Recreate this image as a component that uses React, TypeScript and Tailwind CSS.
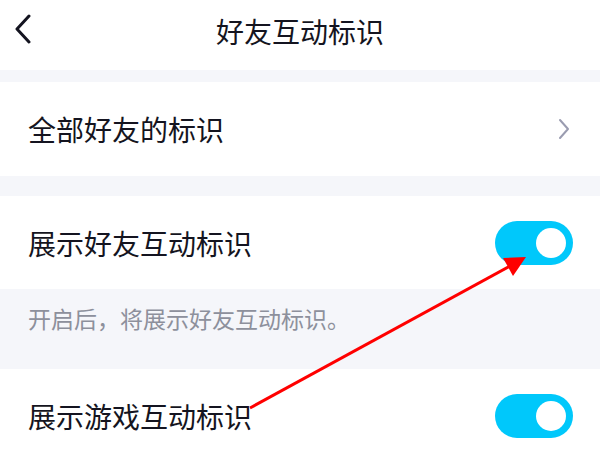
const font = { fontFamily: '"Noto Sans CJK SC", "Noto Sans", sans-serif' };

function Toggle() {
  return (
    <div className="flex h-[44px] w-[78px] items-center justify-end rounded-full bg-[#00c8fb] pr-[7px]">
      <div className="h-[30px] w-[30px] rounded-full bg-white" />
    </div>
  );
}

export default function App() {
  return (
    <div className="relative h-[450px] w-[600px] overflow-hidden bg-white text-[#141420]" style={font}>
      <header className="relative flex h-[70px] items-center justify-center pb-[8px]">
        <svg className="absolute left-[12px] top-[14px]" width="22" height="30" viewBox="0 0 22 30" fill="none">
          <path d="M17 2 L5 15 L17 28" stroke="#141420" strokeWidth="3" strokeLinecap="round" strokeLinejoin="round" />
        </svg>
        <h1 className="text-[28px] leading-none">好友互动标识</h1>
      </header>
      <div className="h-[12px] bg-[#f5f6fa]" />
      <div className="flex h-[94px] items-center justify-between pl-[28px] pr-[30px]">
        <span className="text-[28px] leading-none">全部好友的标识</span>
        <svg width="12" height="22" viewBox="0 0 12 22" fill="none">
          <path d="M2 2 L10 11 L2 20" stroke="#9a9cb0" strokeWidth="2" strokeLinecap="round" strokeLinejoin="round" />
        </svg>
      </div>
      <div className="h-[20px] bg-[#f5f6fa]" />
      <div className="flex h-[93px] items-center justify-between pl-[28px] pr-[27px]">
        <span className="text-[28px] leading-none">展示好友互动标识</span>
        <Toggle />
      </div>
      <div className="h-[80px] bg-[#f5f6fa] pl-[28px] pt-[18px]">
        <span className="text-[23px] leading-none text-[#8d909c]">开启后，将展示好友互动标识。</span>
      </div>
      <div className="flex h-[93px] items-center justify-between pl-[28px] pr-[27px]">
        <span className="text-[28px] leading-none">展示游戏互动标识</span>
        <Toggle />
      </div>
      <svg className="pointer-events-none absolute left-0 top-0" width="600" height="450" viewBox="0 0 600 450">
        <line x1="250" y1="408" x2="510" y2="266" stroke="#ff0000" strokeWidth="3" />
        <polygon points="526,257 503,258 513,276" fill="#ff0000" />
      </svg>
    </div>
  );
}
